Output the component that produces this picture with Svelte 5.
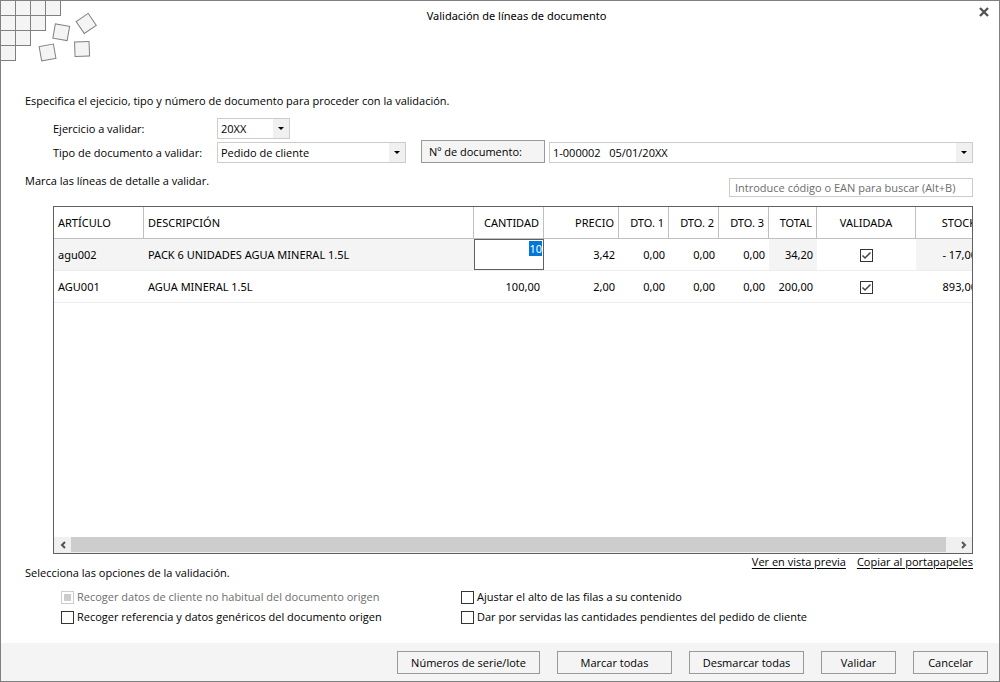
<script lang="ts">
	import { onMount } from 'svelte';

	type Line = {
		code: string;
		description: string;
		quantity: string;
		price: string;
		discounts: string[];
		total: string;
		validated: boolean;
		stock: string;
	};

	let lines: Line[] = $state([
		{
			code: 'agu002',
			description: 'PACK 6 UNIDADES AGUA MINERAL 1.5L',
			quantity: '10',
			price: '3,42',
			discounts: ['0,00', '0,00', '0,00'],
			total: '34,20',
			validated: true,
			stock: '- 17,00'
		},
		{
			code: 'AGU001',
			description: 'AGUA MINERAL 1.5L',
			quantity: '100,00',
			price: '2,00',
			discounts: ['0,00', '0,00', '0,00'],
			total: '200,00',
			validated: true,
			stock: '893,00'
		}
	]);

	const options = [
		{ label: 'Recoger datos de cliente no habitual del documento origen', disabled: true },
		{ label: 'Ajustar el alto de las filas a su contenido', disabled: false },
		{ label: 'Recoger referencia y datos genéricos del documento origen', disabled: false },
		{ label: 'Dar por servidas las cantidades pendientes del pedido de cliente', disabled: false }
	];

	const editing = 0;
	let quantityInput: HTMLInputElement;

	onMount(() => {
		quantityInput.focus();
		quantityInput.select();
	});

	function markAll(value: boolean) {
		for (const line of lines) line.validated = value;
	}
</script>

<main class="dialog">
	<header>
		<svg class="logo" width="97" height="62" viewBox="1 1 97 62" aria-hidden="true">
			{#each [4, 3, 2, 1] as count, row}
				{#each Array(count) as _, col}
					<rect x={col * 15 + 0.5} y={row * 15 + 0.5} width="15" height="15" />
				{/each}
			{/each}
			<rect x="54" y="25" width="14.5" height="14.5" transform="rotate(10 61.2 32.2)" />
			<rect x="79" y="16.2" width="14.5" height="14.5" transform="rotate(-34 86.3 23.5)" />
			<rect x="40.3" y="45.2" width="14.5" height="14.5" transform="rotate(-10 47.5 52.5)" />
			<rect x="74.8" y="41.8" width="14.5" height="14.5" transform="rotate(-2 82 49)" />
		</svg>
		<h1>Validación de líneas de documento</h1>
		<button class="close" type="button" aria-label="Cerrar">
			<svg width="10" height="10" viewBox="0 0 10 10">
				<path d="M1 1L9 9M9 1L1 9" />
			</svg>
		</button>
	</header>

	<div class="content">
		<p>Especifica el ejecicio, tipo y número de documento para proceder con la validación.</p>

		<div class="form">
			<label for="year">Ejercicio a validar:</label>
			<div class="combo year">
				<select id="year"><option>20XX</option></select>
			</div>

			<label for="kind">Tipo de documento a validar:</label>
			<div class="document">
				<div class="combo kind">
					<select id="kind"><option>Pedido de cliente</option></select>
				</div>
				<button class="btn number" type="button">Nº de documento:</button>
				<div class="combo reference">
					<select aria-label="Nº de documento">
						<option>1-000002&nbsp;&nbsp; 05/01/20XX</option>
					</select>
				</div>
			</div>
		</div>

		<div class="lines-bar">
			<p>Marca las líneas de detalle a validar.</p>
			<input
				class="search"
				type="text"
				placeholder="Introduce código o EAN para buscar (Alt+B)"
				aria-label="Buscar"
			/>
		</div>

		<section class="grid">
			<div class="viewport">
				<table>
					<colgroup>
						<col class="w-code" />
						<col class="w-desc" />
						<col class="w-qty" />
						<col class="w-price" />
						<col class="w-dto" />
						<col class="w-dto" />
						<col class="w-dto" />
						<col class="w-total" />
						<col class="w-valid" />
						<col class="w-stock" />
					</colgroup>
					<thead>
						<tr>
							<th class="text">ARTÍCULO</th>
							<th class="text">DESCRIPCIÓN</th>
							<th>CANTIDAD</th>
							<th>PRECIO</th>
							<th>DTO. 1</th>
							<th>DTO. 2</th>
							<th>DTO. 3</th>
							<th>TOTAL</th>
							<th class="center">VALIDADA</th>
							<th>STOCK</th>
						</tr>
					</thead>
					<tbody>
						{#each lines as line, i}
							<tr class:current={i === editing}>
								<td class="text locked">{line.code}</td>
								<td class="text locked">{line.description}</td>
								{#if i === editing}
									<td class="edit">
										<input
											type="text"
											aria-label="Cantidad"
											bind:this={quantityInput}
											bind:value={line.quantity}
										/>
									</td>
								{:else}
									<td>{line.quantity}</td>
								{/if}
								<td>{line.price}</td>
								{#each line.discounts as discount}
									<td>{discount}</td>
								{/each}
								<td class="locked">{line.total}</td>
								<td class="center">
									<input
										class="check"
										type="checkbox"
										aria-label="Validada"
										bind:checked={line.validated}
									/>
								</td>
								<td class="locked">{line.stock}</td>
							</tr>
						{/each}
					</tbody>
				</table>
			</div>
			<div class="scrollbar">
				<button type="button" aria-label="Desplazar a la izquierda">
					<svg width="6" height="8" viewBox="0 0 6 8"><path d="M5 1L2 4L5 7" /></svg>
				</button>
				<div class="thumb"></div>
				<button type="button" aria-label="Desplazar a la derecha">
					<svg width="6" height="8" viewBox="0 0 6 8"><path d="M1 1L4 4L1 7" /></svg>
				</button>
			</div>
		</section>

		<div class="options-bar">
			<p>Selecciona las opciones de la validación.</p>
			<nav>
				<a href="#vista-previa">Ver en vista previa</a>
				<a href="#portapapeles">Copiar al portapapeles</a>
			</nav>
		</div>

		<div class="options">
			{#each options as option}
				<label class:disabled={option.disabled}>
					<input class="check" type="checkbox" disabled={option.disabled} />
					{option.label}
				</label>
			{/each}
		</div>
	</div>

	<footer>
		<button class="btn wide" type="button">Números de serie/lote</button>
		<button class="btn medium" type="button" onclick={() => markAll(true)}>Marcar todas</button>
		<button class="btn medium" type="button" onclick={() => markAll(false)}>Desmarcar todas</button>
		<button class="btn" type="button">Validar</button>
		<button class="btn" type="button">Cancelar</button>
	</footer>
</main>

<style>
	:global(body) {
		margin: 0;
		background: #fff;
	}

	.dialog {
		display: flex;
		flex-direction: column;
		box-sizing: border-box;
		min-height: 100vh;
		border: 1px solid #808080;
		color: #000;
		font: 11px/16px 'Open Sans', 'Noto Sans', sans-serif;
	}

	button,
	input,
	select {
		box-sizing: border-box;
		margin: 0;
		color: inherit;
		font: inherit;
	}

	p,
	h1 {
		margin: 0;
	}

	header {
		display: grid;
		grid-template-columns: 97px 1fr 64px;
		align-items: start;
		height: 92px;
	}

	.logo {
		fill: #f4f4f4;
		stroke: #808080;
	}

	h1 {
		padding-top: 7px;
		font: 11px/16px 'Noto Sans', 'Open Sans', sans-serif;
		text-align: center;
	}

	.close {
		display: flex;
		justify-self: end;
		padding: 6px 10px;
		border: 0;
		background: none;
	}

	.close path {
		fill: none;
		stroke: #555;
		stroke-width: 2.4;
	}

	.content {
		display: flex;
		flex: 1;
		flex-direction: column;
		padding: 0 26px 18px 24px;
	}

	.form {
		display: grid;
		grid-template-columns: 164px 1fr;
		align-items: end;
		row-gap: 1px;
		margin: 9px 0 0 28px;
		line-height: 21px;
	}

	.document {
		display: flex;
		align-items: flex-end;
	}

	.combo {
		position: relative;
		height: 21px;
	}

	.combo select {
		display: block;
		width: 100%;
		height: 100%;
		padding: 0 18px 0 3px;
		border: 1px solid #ccc;
		border-radius: 0;
		background: #fff;
		line-height: 16px;
		appearance: none;
	}

	.combo::before {
		position: absolute;
		top: 1px;
		right: 1px;
		bottom: 1px;
		width: 16px;
		background: #f0f0f0;
		content: '';
		pointer-events: none;
	}

	.combo::after {
		position: absolute;
		top: 9px;
		right: 6px;
		border: 3px solid transparent;
		border-top-color: #000;
		border-bottom: 0;
		content: '';
		pointer-events: none;
	}

	.year {
		width: 73px;
	}

	.kind {
		width: 189px;
	}

	.reference {
		flex: 1;
	}

	.btn {
		min-width: 75px;
		height: 23px;
		padding: 0 8px;
		border: 1px solid #999;
		background: #f4f4f4;
		line-height: 16px;
	}

	.number {
		width: 124px;
		margin: 0 4px 0 15px;
		padding: 0 7px;
		text-align: left;
	}

	.lines-bar {
		display: flex;
		justify-content: space-between;
		padding: 10px 0 9px;
	}

	.search {
		width: 244px;
		height: 19px;
		margin-top: 5px;
		padding: 0 5px;
		border: 1px solid #ccc;
	}

	.search::placeholder {
		color: #6d6d6d;
		opacity: 1;
	}

	.grid {
		display: flex;
		flex: 1;
		flex-direction: column;
		margin-left: 28px;
		border: 1px solid #606060;
	}

	.viewport {
		flex: 1;
		overflow: hidden;
	}

	table {
		width: 927px;
		border-spacing: 0;
		font-family: 'Noto Sans', 'Open Sans', sans-serif;
		table-layout: fixed;
	}

	.w-code { width: 90px; }
	.w-desc { width: 330px; }
	.w-qty { width: 70px; }
	.w-price { width: 75px; }
	.w-dto { width: 50px; }
	.w-total { width: 48px; }
	.w-valid { width: 99px; }
	.w-stock { width: 65px; }

	th,
	td {
		box-sizing: border-box;
		height: 32px;
		padding: 0 4px;
		text-align: right;
		white-space: nowrap;
	}

	th {
		border-right: 1px solid #c0c0c0;
		border-bottom: 1px solid #c0c0c0;
		font-weight: 400;
	}

	td {
		border-bottom: 1px solid #ededed;
	}

	.text {
		text-align: left;
	}

	.center {
		text-align: center;
	}

	.current .locked {
		background: #f4f4f4;
	}

	.edit {
		padding: 0;
	}

	.edit input {
		display: block;
		width: 100%;
		height: 31px;
		padding: 0 1px 13px;
		border: 1px solid #606060;
		outline: 0;
		text-align: right;
	}

	.edit input::selection {
		background: #0078d7;
		color: #fff;
	}

	.check {
		flex: none;
		width: 13px;
		height: 13px;
		border: 1px solid #333;
		background: #fff;
		appearance: none;
		vertical-align: middle;
	}

	.check:checked {
		background: url("data:image/svg+xml,%3Csvg xmlns='http://www.w3.org/2000/svg' viewBox='0 0 11 11'%3E%3Cpath d='M1.5 5.5L4 8L9.5 2.5' fill='none' stroke='%23444' stroke-width='1.5'/%3E%3C/svg%3E");
	}

	.check:disabled {
		padding: 2px;
		border-color: #ccc;
		background: #ccc content-box;
	}

	.scrollbar {
		display: flex;
		height: 16px;
		background: #f0f0f0;
	}

	.scrollbar button {
		display: flex;
		align-items: center;
		justify-content: center;
		width: 17px;
		padding: 0;
		border: 0;
		background: none;
	}

	.scrollbar path {
		fill: none;
		stroke: #555;
		stroke-width: 2;
	}

	.thumb {
		flex: 1;
		height: 15px;
		margin-right: 9px;
		background: #cdcdcd;
	}

	.options-bar {
		display: flex;
		justify-content: space-between;
	}

	.options-bar p {
		padding-top: 11px;
	}

	nav {
		display: flex;
		gap: 11px;
	}

	nav a {
		color: inherit;
		text-underline-offset: 2px;
	}

	.options {
		display: grid;
		grid-template-columns: repeat(2, minmax(0, 400px));
		row-gap: 4px;
		margin: 8px 0 0 36px;
	}

	.options label {
		display: flex;
		align-items: center;
		gap: 3px;
	}

	.options .disabled {
		color: #6d6d6d;
	}

	footer {
		display: flex;
		justify-content: flex-end;
		gap: 17px;
		padding: 8px 11px 7px;
		background: #f4f4f4;
	}

	.medium {
		width: 115px;
	}

	.wide {
		width: 143px;
	}
</style>
